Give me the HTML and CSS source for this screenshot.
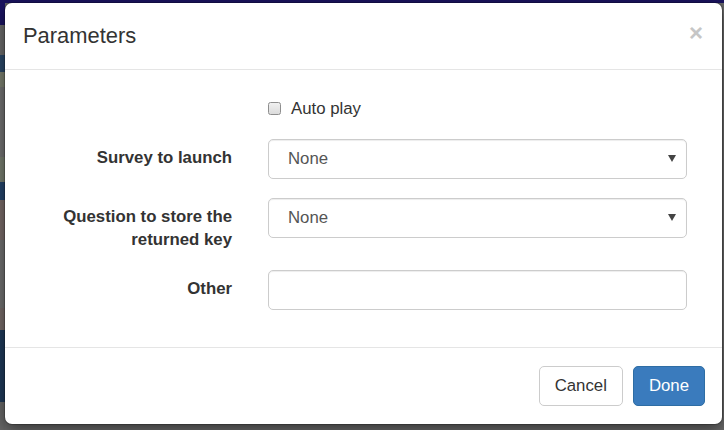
FILE: index.html
```html
<!DOCTYPE html>
<html lang="en">
<head>
<meta charset="utf-8">
<title>Parameters</title>
<link rel="stylesheet" href="styles.css">
</head>
<body>
<div class="page">
  <div class="topbar">
    <nav class="topnav"><span class="nav-a">Modules</span><span class="nav-b">Ats</span><span class="nav-c">Tools</span></nav>
  </div>
  <div class="under">
    <div class="sidebar">
      <div class="band b-navy"></div>
      <div class="band b-gray1"></div>
      <div class="band b-blue1"></div>
      <div class="band b-green1"></div>
      <div class="band b-gray2"></div>
      <div class="band b-green2"></div>
      <div class="band b-blue2"></div>
      <div class="band b-brown1"></div>
      <div class="band b-gray3"></div>
      <div class="band b-brown2"></div>
      <div class="band b-blue3"></div>
      <div class="band b-gray4"></div>
    </div>
    <div class="content"></div>
  </div>
</div>

<div class="modal">
  <div class="modal-header">
    <h4 class="modal-title">Parameters</h4>
    <button class="close" type="button">&times;</button>
  </div>
  <div class="modal-body">
    <form class="form">
      <div class="label-cell"></div>
      <label class="checkbox"><input type="checkbox" class="check"><span>Auto play</span></label>

      <label class="ctl-label">Survey to launch</label>
      <div class="select"><span class="select-text">None</span><svg class="caret" width="8" height="7" viewBox="0 0 8 7"><path d="M0 0H8L4 7Z"/></svg></div>

      <label class="ctl-label">Question to store the returned key</label>
      <div class="select"><span class="select-text">None</span><svg class="caret" width="8" height="7" viewBox="0 0 8 7"><path d="M0 0H8L4 7Z"/></svg></div>

      <label class="ctl-label">Other</label>
      <input class="text-input" type="text">
    </form>
  </div>
  <div class="modal-footer">
    <button class="btn btn-default" type="button">Cancel</button>
    <button class="btn btn-primary" type="button">Done</button>
  </div>
</div>
</body>
</html>
```
FILE: styles.css
```css
html, body {
  margin: 0;
  padding: 0;
}
body {
  width: 724px;
  height: 430px;
  overflow: hidden;
  background: #5c5c5c;
  font-family: "Liberation Sans", Arial, sans-serif;
  position: relative;
}

/* backdrop page */
.page {
  height: 430px;
  display: flex;
  flex-direction: column;
}
.topbar {
  height: 3px;
  overflow: hidden;
  background: #1a135e;
  flex: none;
}
.topnav {
  display: flex;
  margin-top: -13px;
  font-size: 16px;
  line-height: 16px;
  color: #8c89aa;
}
.nav-a { margin-left: 437px; }
.nav-b { margin-left: 56px; }
.nav-c { margin-left: 60px; }
.under {
  flex: 1;
  display: flex;
}
.sidebar {
  width: 5px;
  display: flex;
  flex-direction: column;
}
.content {
  flex: 1;
  background: #6a6a6a;
}
.band { flex: none; }
.b-navy { height: 22px; background: #1b1462; }
.b-gray1 { height: 30px; background: #6b6b6b; }
.b-blue1 { height: 17px; background: #2b4868; }
.b-green1 { height: 15px; background: #7a7f6f; }
.b-gray2 { height: 70px; background: #727272; }
.b-green2 { height: 25px; background: #777e6f; }
.b-blue2 { height: 18px; background: #24446a; }
.b-brown1 { height: 40px; background: #786a68; }
.b-gray3 { height: 68px; background: #707070; }
.b-brown2 { height: 22px; background: #756a68; }
.b-blue3 { height: 72px; background: #1f3a5a; }
.b-gray4 { height: 28px; background: #686868; }

/* modal */
.modal {
  position: absolute;
  left: 5px;
  top: 3px;
  width: 717px;
  background: #fff;
  border-radius: 7px;
  box-shadow: 0 0 0 1px rgba(0,0,0,0.2), 0 5px 15px rgba(0,0,0,0.5);
  color: #333;
}
.modal-header {
  display: flex;
  align-items: flex-start;
  justify-content: space-between;
  padding: 18px 18px 18px 18px;
  border-bottom: 1px solid #e5e5e5;
}
.modal-title {
  margin: 0;
  font-size: 21.9px;
  font-weight: normal;
  line-height: 30px;
  color: #333;
}
.close {
  margin: 0;
  padding: 0;
  border: 0;
  background: transparent;
  font-family: "Liberation Sans", Arial, sans-serif;
  font-size: 24px;
  font-weight: bold;
  line-height: 24px;
  color: #c6c6c6;
  margin-top: 0;
  margin-right: 1px;
}

.modal-body {
  padding: 18px 35px 37px 18px;
}
.form {
  display: grid;
  grid-template-columns: 209px 419px;
  column-gap: 36px;
  row-gap: 19px;
  font-size: 16.8px;
}
.label-cell { height: 32px; }
.checkbox {
  display: flex;
  align-items: center;
  height: 32px;
  padding-top: 8px;
  box-sizing: border-box;
  align-self: start;
  line-height: 23px;
  color: #333;
}
.checkbox span { margin-left: 10px; }
.check {
  appearance: none;
  -webkit-appearance: none;
  margin: 0;
  width: 13px;
  height: 13px;
  box-sizing: border-box;
  border: 1px solid #8e8e8e;
  border-radius: 2.5px;
  background: linear-gradient(#f0f0f0, #dcdcdc);
}
.ctl-label {
  text-align: right;
  font-weight: bold;
  padding-top: 7px;
  line-height: 23px;
  color: #333;
  align-self: start;
}
.select,
.text-input {
  height: 40px;
  box-sizing: border-box;
  border: 1px solid #ccc;
  border-radius: 5px;
  background: #fff;
  box-shadow: inset 0 1px 1px rgba(0,0,0,0.075);
}
.select {
  display: flex;
  align-items: center;
  justify-content: space-between;
  padding: 0 10px 1px 19px;
}
.select-text {
  color: #555;
  font-size: 16.8px;
}
.caret path { fill: #444; }
.text-input {
  width: 419px;
  margin: 0;
  padding: 0 14px;
  font-family: inherit;
  font-size: 16.8px;
}

.modal-footer {
  display: flex;
  justify-content: flex-end;
  gap: 10px;
  padding: 18px 17px 18px 18px;
  border-top: 1px solid #e5e5e5;
}
.btn {
  height: 40px;
  box-sizing: border-box;
  padding: 0 15px;
  border-radius: 5px;
  font-family: "Liberation Sans", Arial, sans-serif;
  font-size: 16.8px;
  line-height: 1;
}
.btn-default {
  background: #fff;
  border: 1px solid #ccc;
  color: #333;
}
.btn-primary {
  background: #3a7bbd;
  border: 1px solid #2e6da4;
  color: #fff;
}
```
